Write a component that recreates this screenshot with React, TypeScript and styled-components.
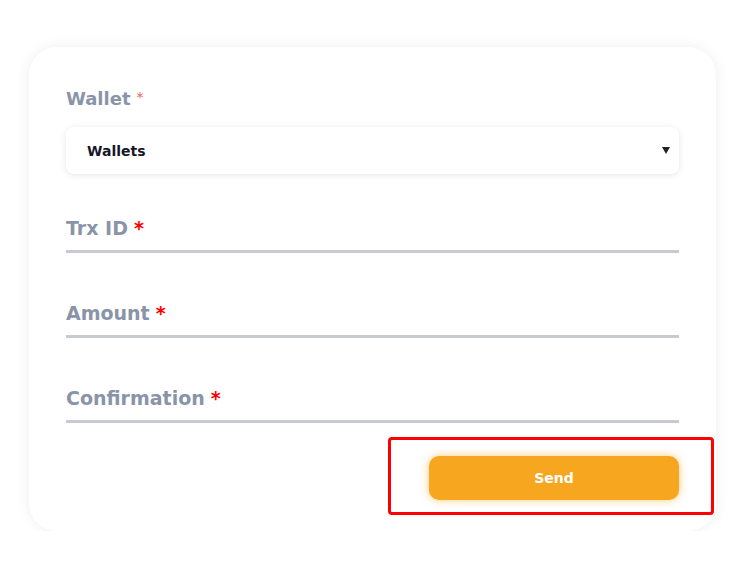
import React from "react"
import styled, { createGlobalStyle } from "styled-components"

const GlobalStyle = createGlobalStyle`
  html, body {
    margin: 0;
    background: #ffffff;
  }
  body {
    font-family: "DejaVu Sans", "Noto Sans", sans-serif;
  }
`

const Page = styled.div`
  padding: 47px 25px 0 29px;
`

const Card = styled.form`
  width: 687px;
  box-sizing: border-box;
  background: #ffffff;
  border-radius: 28px;
  box-shadow: 0 0 14px rgba(0, 0, 0, 0.07);
  padding: 38px 37px 16px 37px;
  display: flex;
  flex-direction: column;
`

const Label = styled.label<{ small?: boolean }>`
  display: block;
  font-size: ${({ small }) => (small ? "18px" : "19px")};
  line-height: 24px;
  font-weight: 700;
  color: #8a94a8;
`

const Star = styled.span<{ soft?: boolean }>`
  color: ${({ soft }) => (soft ? "#f25c5c" : "#ff0000")};
  font-weight: ${({ soft }) => (soft ? 400 : 700)};
  font-size: ${({ soft }) => (soft ? "14px" : "19px")};
  margin-left: 6px;
  vertical-align: ${({ soft }) => (soft ? "3px" : "0")};
`

const SelectBox = styled.div`
  margin-top: 16px;
  height: 47px;
  border-radius: 8px;
  background: #ffffff;
  box-shadow: 0 1px 7px rgba(0, 0, 0, 0.1);
  display: flex;
  align-items: center;
  justify-content: space-between;
  padding: 0 9px 0 21px;
  font-size: 14px;
  font-weight: 700;
  color: #16162a;
`

const Caret = styled.span`
  width: 0;
  height: 0;
  border-left: 4px solid transparent;
  border-right: 4px solid transparent;
  border-top: 7px solid #222222;
`

const Field = styled.div<{ first?: boolean }>`
  margin-top: ${({ first }) => (first ? "42px" : "48px")};
  padding-bottom: 10px;
  border-bottom: 3px solid #c8cad2;
`

const ButtonRow = styled.div`
  display: flex;
  justify-content: flex-end;
  margin-top: 14px;
  margin-right: -35px;
`

const Highlight = styled.div`
  border: 3px solid #ff0000;
  border-radius: 4px;
  padding: 16px 32px 12px 38px;
`

const SendButton = styled.button`
  width: 250px;
  height: 44px;
  border: none;
  border-radius: 10px;
  background: #f6a61f;
  box-shadow: 0 0 8px rgba(246, 166, 31, 0.6);
  color: #ffffff;
  font-family: inherit;
  font-size: 14px;
  font-weight: 700;
  cursor: pointer;
`

export default function App() {
  return (
    <>
      <GlobalStyle />
      <Page>
        <Card onSubmit={e => e.preventDefault()}>
          <Label small>
            Wallet<Star soft>*</Star>
          </Label>
          <SelectBox>
            <span>Wallets</span>
            <Caret />
          </SelectBox>

          <Field first>
            <Label>
              Trx ID<Star>*</Star>
            </Label>
          </Field>
          <Field>
            <Label>
              Amount<Star>*</Star>
            </Label>
          </Field>
          <Field>
            <Label>
              Confirmation<Star>*</Star>
            </Label>
          </Field>

          <ButtonRow>
            <Highlight>
              <SendButton type="submit">Send</SendButton>
            </Highlight>
          </ButtonRow>
        </Card>
      </Page>
    </>
  )
}
